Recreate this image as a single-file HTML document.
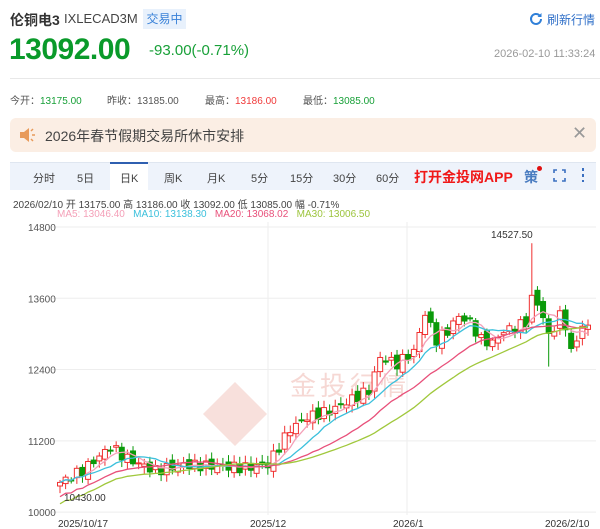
<!DOCTYPE html>
<html><head><meta charset="utf-8"><style>
*{margin:0;padding:0;box-sizing:border-box}
body{width:600px;height:529px;background:#fff;font-family:"Liberation Sans","Noto Sans CJK SC",sans-serif;position:relative;overflow:hidden;color:#333}
.a{position:absolute;white-space:nowrap}
</style></head><body>
<div class="a" style="left:10px;top:10px;font-size:14px;font-weight:bold;color:#333">伦铜电3</div>
<div class="a" style="left:64px;top:11px;font-size:13px;color:#444">IXLECAD3M</div>
<div class="a" style="left:143px;top:9px;width:43px;height:20px;background:#e8f1fc;color:#3a82d8;font-size:12px;line-height:20px;text-align:center">交易中</div>
<svg class="a" style="left:529px;top:12px" width="14" height="14" viewBox="0 0 14 14"><path d="M12 7a5 5 0 1 1-1.5-3.6" fill="none" stroke="#2f7fd8" stroke-width="2"/><path d="M12.5 1v4h-4z" fill="#2f7fd8"/></svg>
<div class="a" style="left:547px;top:11px;font-size:12px;color:#2f6fc8">刷新行情</div>
<div class="a" style="left:9px;top:33px;font-size:30px;font-weight:bold;color:#0a9a2a;letter-spacing:-0.5px">13092.00</div>
<div class="a" style="left:149px;top:42px;font-size:15px;color:#18a038">-93.00(-0.71%)</div>
<div class="a" style="left:494px;top:48px;font-size:11px;color:#999">2026-02-10 11:33:24</div>
<div class="a" style="left:10px;top:78px;width:590px;height:1px;background:#e8e8e8"></div>
<div class="a" style="left:10px;top:92px;font-size:10px;color:#555">今开：<span style="color:#18a038">13175.00</span></div>
<div class="a" style="left:107px;top:92px;font-size:10px;color:#555">昨收：13185.00</div>
<div class="a" style="left:205px;top:92px;font-size:10px;color:#555">最高：<span style="color:#f03a3a">13186.00</span></div>
<div class="a" style="left:303px;top:92px;font-size:10px;color:#555">最低：<span style="color:#18a038">13085.00</span></div>
<div class="a" style="left:10px;top:118px;width:586px;height:34px;background:#fbeee4;border-radius:6px"></div>
<svg class="a" style="left:18px;top:126px" width="18" height="18" viewBox="0 0 18 18"><path d="M2 6h4l5-4v14l-5-4H2z" fill="#e89a5a"/><path d="M13 5l2-2M14 9h3M13 13l2 2" stroke="#e89a5a" stroke-width="1.5"/></svg>
<div class="a" style="left:45px;top:126px;font-size:14px;color:#444">2026年春节假期交易所休市安排</div>
<div class="a" style="left:572px;top:123px;font-size:18px;color:#999">✕</div>
<div class="a" style="left:10px;top:162px;width:586px;height:28px;background:#eef3fb;border-top:1px solid #dfe6f0"></div>
<div class="a" style="left:110px;top:162px;width:38px;height:29px;background:#fff;border-top:2px solid #2f5fb0"></div>
<div class="a" style="left:33px;top:170px;font-size:11px;color:#444">分时</div>
<div class="a" style="left:77px;top:170px;font-size:11px;color:#444">5日</div>
<div class="a" style="left:120px;top:170px;font-size:11px;color:#444">日K</div>
<div class="a" style="left:164px;top:170px;font-size:11px;color:#444">周K</div>
<div class="a" style="left:207px;top:170px;font-size:11px;color:#444">月K</div>
<div class="a" style="left:251px;top:170px;font-size:11px;color:#444">5分</div>
<div class="a" style="left:290px;top:170px;font-size:11px;color:#444">15分</div>
<div class="a" style="left:333px;top:170px;font-size:11px;color:#444">30分</div>
<div class="a" style="left:376px;top:170px;font-size:11px;color:#444">60分</div>
<div class="a" style="left:414px;top:167px;font-size:14px;font-weight:bold;color:#f01818">打开金投网APP</div>
<div class="a" style="left:524px;top:167px;font-size:14px;font-weight:bold;color:#4a7cc0">策</div>
<div class="a" style="left:537px;top:166px;width:5px;height:5px;border-radius:50%;background:#e01010"></div>
<svg class="a" style="left:553px;top:169px" width="13" height="13" viewBox="0 0 13 13"><path d="M1 4V1h3M9 1h3v3M12 9v3H9M4 12H1V9" fill="none" stroke="#3a6fc0" stroke-width="1.6"/></svg>
<div class="a" style="left:582px;top:168px;width:2px;height:14px;background:repeating-linear-gradient(#3a6fc0 0 3px,transparent 3px 6px)"></div>
<div class="a" style="left:13px;top:196px;font-size:10px;color:#444">2026/02/10 开 13175.00 高 13186.00 收 13092.00 低 13085.00 幅 -0.71%</div>
<div class="a" style="left:57px;top:209px;font-size:10px"><span style="color:#f4a0b8">MA5: 13046.40</span>&nbsp;&nbsp; <span style="color:#3cc0dc">MA10: 13138.30</span>&nbsp;&nbsp; <span style="color:#e8507a">MA20: 13068.02</span>&nbsp;&nbsp; <span style="color:#9cc43c">MA30: 13006.50</span></div>
<svg id="ch" class="a" style="left:0;top:220px" width="600" height="309" viewBox="0 220 600 309"></svg>
<script>
var s='';function Y(v){return 227+(14800-v)*0.0594}
[14800,13600,12400,11200,10000].forEach(function(v){var y=Y(v);s+='<line x1="52" x2="596" y1="'+y+'" y2="'+y+'" stroke="#eee"/>';s+='<text x="28" y="'+(y+4)+'" font-size="10" fill="#555" font-family="Liberation Sans">'+v+'</text>'});
[268,407].forEach(function(x){s+='<line x1="'+x+'" x2="'+x+'" y1="222" y2="515" stroke="#eee"/>'});
s+='<text x="410" y="395" font-size="26" fill="#f6d8d4" font-family="Noto Sans CJK SC" letter-spacing="4" text-anchor="end">金投行情</text>';
s+='<path d="M235 382l32 32-32 32-32-32z" fill="#f8e0dc"/>';
var K=[[0,10500],[4,10700],[9,11100],[12,10900],[17,10700],[22,10800],[33,10750],[37,10800],[41,11400],[44,11600],[48,11700],[52,11900],[55,12050],[57,12600],[60,12500],[63,12700],[65,13350],[67,12900],[69,13050],[71,13300],[73,13200],[75,12900],[77,12850],[79,13050],[81,13100],[83,13200],[84,13700],[86,13300],[87,12950],[89,13300],[90,13150],[91,12700],[92,12900],[93,13150],[94,13092]];
var C=[],N=95;for(var i=0;i<N;i++){for(var j=0;j<K.length-1;j++)if(i>=K[j][0]&&i<=K[j+1][0]){var t=(i-K[j][0])/((K[j+1][0]-K[j][0])||1);C.push(K[j][1]+(K[j+1][1]-K[j][1])*t+(Math.sin(i*2.7)*90));break}}
var x0=60,dx=(588-60)/(N-1);
for(var i=0;i<N;i++){var c=C[i],o=i?C[i-1]+Math.cos(i*1.9)*60:c-60;if(i==84){o=13200;c=13650}var h=Math.max(o,c)+40+Math.abs(Math.sin(i*3.1))*80,l=Math.min(o,c)-40-Math.abs(Math.cos(i*2.3))*80;if(i==84)h=14527;if(i==87)l=12450;var x=x0+i*dx,up=c>=o,col=up?'#f03030':'#0a9a0a';s+='<line x1="'+x+'" x2="'+x+'" y1="'+Y(h)+'" y2="'+Y(l)+'" stroke="'+col+'"/>';var yt=Y(Math.max(o,c)),hh=Math.max(1,Y(Math.min(o,c))-yt);s+='<rect x="'+(x-2.5)+'" y="'+yt+'" width="5" height="'+hh+'" fill="'+(up?'#fff':col)+'" stroke="'+col+'"/>'}
function ma(n,col){var p='';for(var i=0;i<N;i++){var a=0,m=Math.min(n,i+1);for(var k=0;k<m;k++)a+=C[i-k];a/=m;if(n>=20&&i<n)a-=(n-i)*12;p+=(i?'L':'M')+(x0+i*dx).toFixed(1)+' '+Y(a).toFixed(1)}s+='<path d="'+p+'" fill="none" stroke="'+col+'" stroke-width="1.3"/>'}
ma(5,'#f4a0b8');ma(10,'#3cc0dc');ma(20,'#e8507a');ma(30,'#a0c83c');
s+='<text x="491" y="238" font-size="10" fill="#333" font-family="Liberation Sans">14527.50</text><text x="64" y="501" font-size="10" fill="#333" font-family="Liberation Sans">10430.00</text>';
[['2025/10/17',58],['2025/12',250],['2026/1',393],['2026/2/10',545]].forEach(function(d){s+='<text x="'+d[1]+'" y="527" font-size="10" fill="#333" font-family="Liberation Sans">'+d[0]+'</text>'});
document.getElementById('ch').innerHTML=s;
</script>
</body></html>
